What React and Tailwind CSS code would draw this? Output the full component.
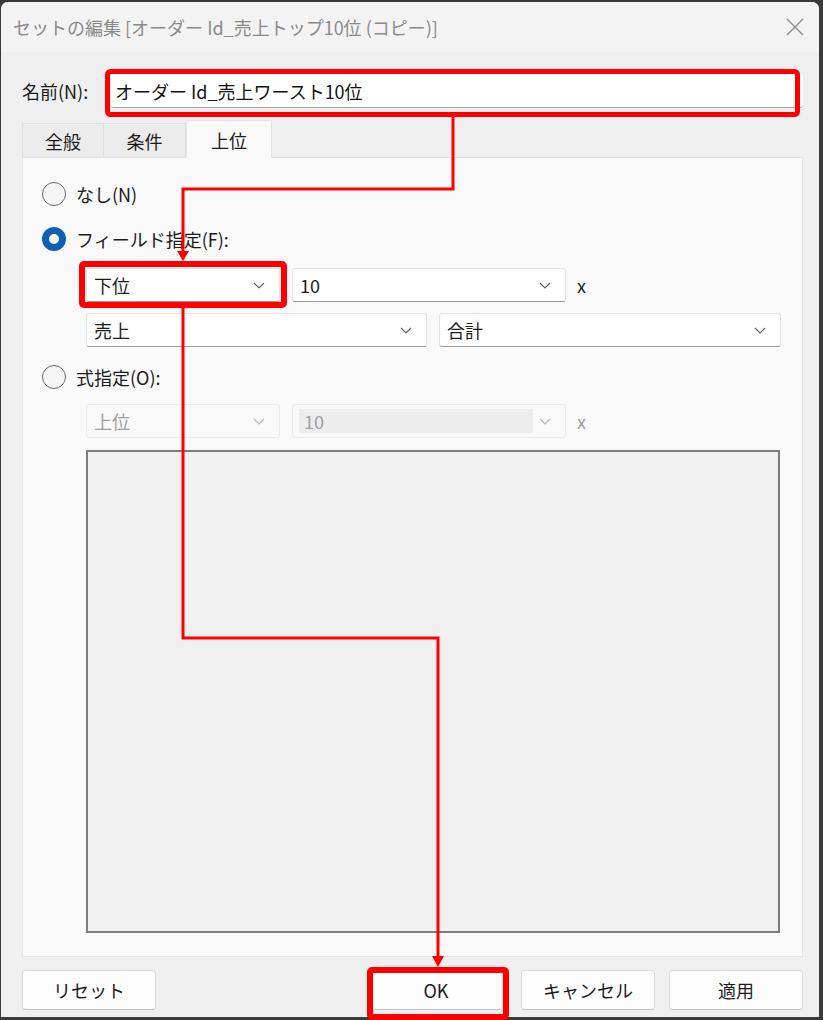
import React from 'react';

const Chevron = ({ disabled }) => (
  <svg width="12" height="7" viewBox="0 0 12 7" className="shrink-0">
    <polyline points="1,1 6,6 11,1" fill="none" stroke={disabled ? '#b8b8b8' : '#5f5f5f'} strokeWidth="1.1" />
  </svg>
);

const Select = ({ value, width, disabled, grayValue }) => (
  <div
    className={`h-[34px] ${width} flex items-center justify-between pl-[7px] pr-[14px] rounded-[3px] border ${
      disabled
        ? 'bg-[#f9f9f9] border-[#ebebeb] text-[#a0a0a0]'
        : 'bg-white border-[#e3e3e3] border-b-[#9c9c9c] text-[#1b1b1b]'
    }`}
  >
    {grayValue ? (
      <div className="h-[24px] w-[234px] -ml-[1px] bg-[#ededed] flex items-center pl-[5px]">{value}</div>
    ) : (
      <span>{value}</span>
    )}
    <Chevron disabled={disabled} />
  </div>
);

const Radio = ({ checked, label }) => (
  <div className="flex items-center gap-[10px] ml-[19px]">
    {checked ? (
      <div className="w-[24px] h-[24px] rounded-full bg-[#0f5fb3] flex items-center justify-center">
        <div className="w-[10px] h-[10px] rounded-full bg-white" />
      </div>
    ) : (
      <div className="w-[24px] h-[24px] rounded-full border-[1.5px] border-[#6a6a6a] bg-[#f5f5f5]" />
    )}
    <span className="text-[18px] text-[#1b1b1b]">{label}</span>
  </div>
);

const Button = ({ label, className = '' }) => (
  <div
    className={`w-[134px] h-[40px] flex items-center justify-center bg-[#fdfdfd] border border-[#dcdcdc] border-b-[#c4c4c4] rounded-[4px] text-[18px] text-[#1b1b1b] ${className}`}
  >
    {label}
  </div>
);

const App = () => {
  return (
    <div className="relative w-[823px] h-[1020px] bg-[#3b3b3b] pt-[2px] pl-[1px] pr-[4px] pb-[3px] overflow-hidden font-['Noto_Sans_CJK_JP','Noto_Sans',sans-serif] leading-none">
      <div className="h-full bg-[#eeefee] rounded-t-[7px] flex flex-col overflow-hidden">
        {/* Title bar */}
        <div className="h-[50px] shrink-0 bg-[#f3f3f3] flex items-center justify-between pl-[12px] pr-[15px]">
          <span className="text-[18px] text-[#8a8a8a]">セットの編集 [オーダー Id_売上トップ10位 (コピー)]</span>
          <svg width="18" height="18" viewBox="0 0 18 18">
            <line x1="1" y1="1" x2="17" y2="17" stroke="#8a8a8a" strokeWidth="1.3" />
            <line x1="17" y1="1" x2="1" y2="17" stroke="#8a8a8a" strokeWidth="1.3" />
          </svg>
        </div>

        {/* Name */}
        <div className="flex items-center mt-[22px] pl-[21px] pr-[16px]">
          <span className="w-[76px] text-[18px] text-[#1b1b1b]">名前(N):</span>
          <div className="ml-[13px] flex-1 h-[34px] bg-white border-b border-[#a8a8a8] rounded-[3px] flex items-center pl-[4px] text-[18px] text-[#111]">
            オーダー Id_売上ワースト10位
          </div>
        </div>

        {/* Tabs */}
        <div className="flex items-end mt-[12px] ml-[21px] h-[37px]">
          <div className="w-[82px] h-[34px] flex items-center justify-center bg-[#ececec] border border-b-0 border-[#e0e0e0] text-[18px] text-[#1b1b1b]">全般</div>
          <div className="w-[82px] h-[34px] flex items-center justify-center bg-[#ececec] border border-b-0 border-l-0 border-[#e0e0e0] text-[18px] text-[#1b1b1b]">条件</div>
          <div className="w-[86px] h-[38px] -mb-px relative z-10 flex items-center justify-center bg-[#f9f9f9] border border-b-0 border-[#e3e3e3] text-[18px] text-[#1b1b1b]">上位</div>
        </div>

        {/* Panel */}
        <div className="ml-[21px] mr-[16px] h-[800px] shrink-0 bg-[#f9f9f9] border border-[#e3e3e3] flex flex-col">
          <div className="mt-[24px]">
            <Radio label="なし(N)" />
          </div>
          <div className="mt-[21px]">
            <Radio checked label="フィールド指定(F):" />
          </div>
          <div className="flex items-center mt-[17px] ml-[63px] gap-[12px] text-[18px]">
            <Select value="下位" width="w-[194px]" />
            <Select value="10" width="w-[274px]" />
            <span className="ml-[-1px] text-[#1b1b1b]">x</span>
          </div>
          <div className="flex items-center mt-[11px] ml-[63px] gap-[12px] text-[18px]">
            <Select value="売上" width="w-[341px]" />
            <Select value="合計" width="w-[342px]" />
          </div>
          <div className="mt-[18px]">
            <Radio label="式指定(O):" />
          </div>
          <div className="flex items-center mt-[15px] ml-[63px] gap-[12px] text-[18px]">
            <Select value="上位" width="w-[194px]" disabled />
            <Select value="10" width="w-[274px]" disabled grayValue />
            <span className="ml-[-1px] text-[#9a9a9a]">x</span>
          </div>
          <div className="mt-[12px] ml-[63px] w-[694px] h-[483px] bg-[#eff0ef] border-2 border-[#7d7d7d]" />
        </div>

        {/* Buttons */}
        <div className="flex items-center mt-[13px] ml-[21px] mr-[16px]">
          <Button label="リセット" />
          <div className="flex-1" />
          <Button label="OK" className="w-[129px]" />
          <Button label="キャンセル" className="ml-[18px]" />
          <Button label="適用" className="ml-[14px]" />
        </div>
      </div>

      {/* Annotation overlay */}
      <svg className="absolute inset-0 pointer-events-none" width="823" height="1020" viewBox="0 0 823 1020">
        <rect x="107.5" y="71.5" width="690" height="43" rx="3" fill="none" stroke="#ff0000" strokeWidth="5" />
        <rect x="82" y="264" width="202" height="41" rx="2" fill="none" stroke="#ff0000" strokeWidth="6" />
        <rect x="370" y="970" width="136" height="47" rx="2" fill="none" stroke="#ff0000" strokeWidth="6" />
        <path d="M453 117 V189 H183 V252" fill="none" stroke="#ff0000" strokeWidth="3" />
        <polygon points="177,251 189,251 183,261" fill="#ff0000" />
        <path d="M183 308 V638 H438 V957" fill="none" stroke="#ff0000" strokeWidth="3" />
        <polygon points="432,956 444,956 438,967" fill="#ff0000" />
      </svg>
    </div>
  );
};

export default App;
